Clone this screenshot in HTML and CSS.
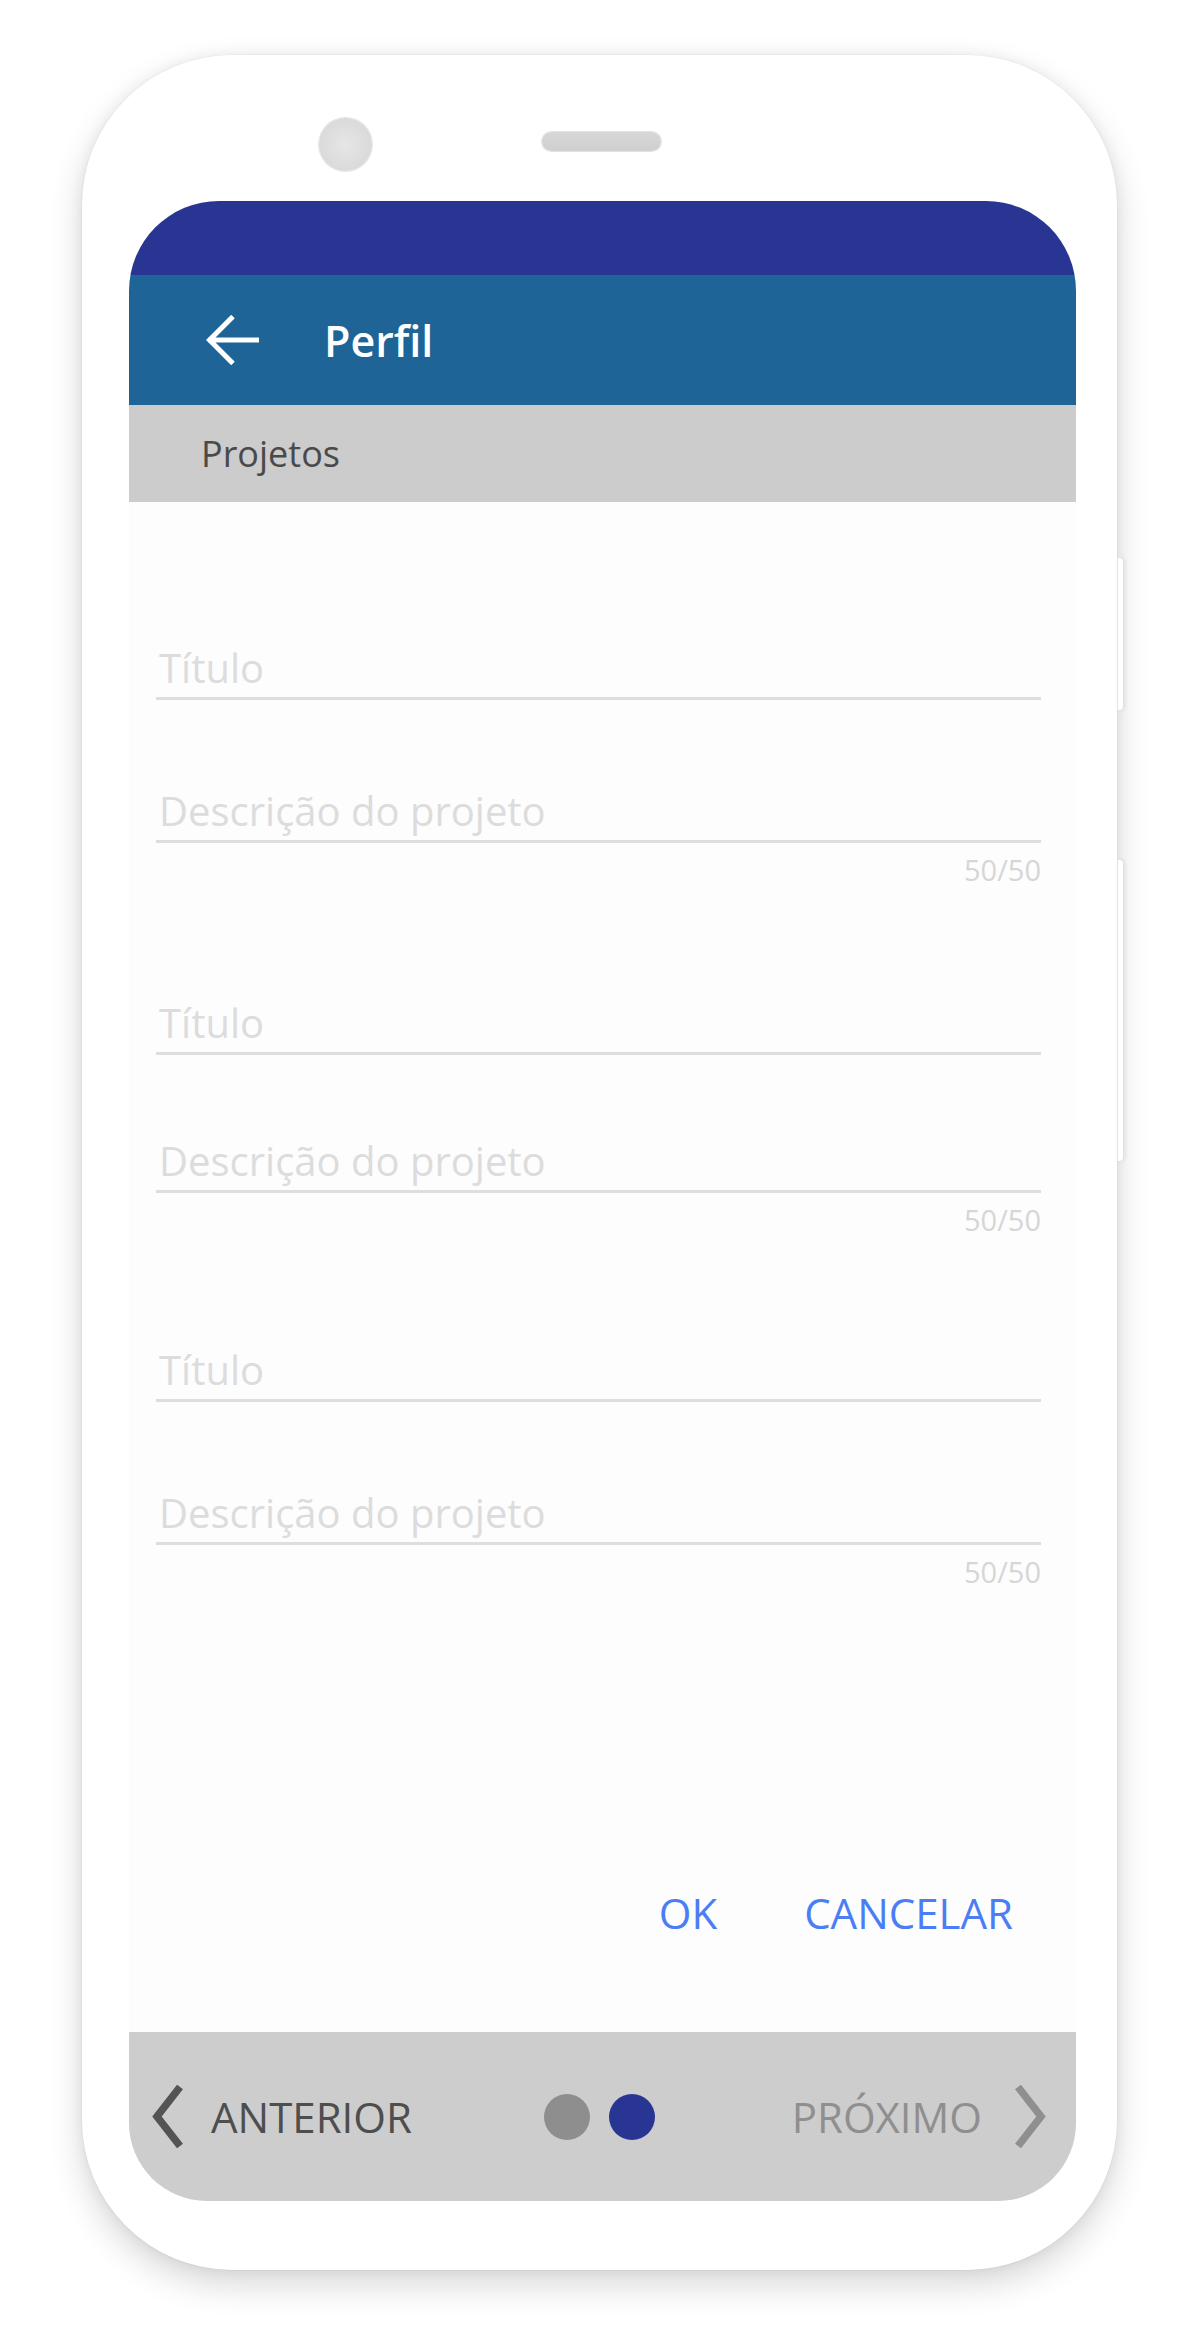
FILE: index.html
```html
<!DOCTYPE html>
<html lang="pt-BR">
<head>
<meta charset="utf-8">
<title>Perfil - Projetos</title>
<link rel="stylesheet" href="styles.css">
</head>
<body>
<div class="phone">
  <span class="side-btn side-btn-a"></span>
  <span class="side-btn side-btn-b"></span>
  <div class="phone-top">
    <span class="camera"></span>
    <span class="speaker"></span>
  </div>
  <div class="screen">
    <div class="status-bar"></div>
    <header class="app-bar">
      <svg class="back-icon" width="54" height="50" viewBox="0 0 54 50" aria-hidden="true">
        <path d="M2 25 H53 M27 1.5 L3.5 25 L27 48.5" fill="none" stroke="#ffffff" stroke-width="5" stroke-linecap="butt" stroke-linejoin="miter"/>
      </svg>
      <h1 class="app-title">Perfil</h1>
    </header>
    <div class="section-bar">Projetos</div>
    <main class="content">
      <section class="project">
        <div class="field">Título</div>
        <div class="field field-desc">Descrição do projeto</div>
        <div class="counter">50/50</div>
      </section>
      <section class="project">
        <div class="field">Título</div>
        <div class="field field-desc">Descrição do projeto</div>
        <div class="counter">50/50</div>
      </section>
      <section class="project">
        <div class="field">Título</div>
        <div class="field field-desc">Descrição do projeto</div>
        <div class="counter">50/50</div>
      </section>
      <div class="actions">
        <span class="action">OK</span>
        <span class="action">CANCELAR</span>
      </div>
    </main>
    <nav class="pager">
      <div class="pager-prev">
        <svg width="33" height="63" viewBox="0 0 33 63" aria-hidden="true">
          <polyline points="30,2 7,31.5 30,61" fill="none" stroke="#545454" stroke-width="7.5"/>
        </svg>
        <span>ANTERIOR</span>
      </div>
      <div class="dots">
        <span class="dot"></span>
        <span class="dot dot-active"></span>
      </div>
      <div class="pager-next">
        <span>PRÓXIMO</span>
        <svg width="33" height="63" viewBox="0 0 33 63" aria-hidden="true">
          <polyline points="3,2 26,31.5 3,61" fill="none" stroke="#8f8f8f" stroke-width="7.5"/>
        </svg>
      </div>
    </nav>
  </div>
</div>
</body>
</html>
```
FILE: styles.css
```css
* { box-sizing: border-box; }

html, body {
  margin: 0;
  padding: 0;
  background: #ffffff;
}

body {
  font-family: "Open Sans", "Noto Sans", "Liberation Sans", sans-serif;
  padding-top: 55px;
  height: 2326px;
  overflow: hidden;
}

.phone {
  position: relative;
  width: 1035px;
  height: 2215px;
  margin-left: 82px;
  padding: 0 41px 69px 47px;
  background: #ffffff;
  border-radius: 150px;
  box-shadow: 0 0 0 1px rgba(0, 0, 0, 0.025), 0 14px 34px rgba(0, 0, 0, 0.16), 0 0 14px rgba(0, 0, 0, 0.06);
}

.side-btn {
  position: absolute;
  right: -6px;
  width: 6px;
  background: #ffffff;
  border-radius: 0 4px 4px 0;
  box-shadow: 2px 0 4px rgba(0, 0, 0, 0.08), inset 1px 0 0 #e4e4e4;
}
.side-btn-a { top: 503px; height: 152px; }
.side-btn-b { top: 805px; height: 301px; }

.phone-top {
  height: 146px;
  display: flex;
  align-items: flex-start;
  padding-left: 190px;
}

.camera {
  width: 53px;
  height: 53px;
  margin-top: 63px;
  border-radius: 50%;
  background: radial-gradient(circle at 50% 50%, #e6e6e6 0%, #dadada 70%, #d2d2d2 100%);
  box-shadow: 0 0 0 1px #e6e6e6;
}

.speaker {
  width: 119px;
  height: 19px;
  margin-top: 77px;
  margin-left: 170px;
  border-radius: 10px;
  background: linear-gradient(#d7d7d7, #cfcfcf);
  box-shadow: 0 0 0 1px #e2e2e2;
}

.screen {
  height: 2000px;
  display: flex;
  flex-direction: column;
  border-radius: 90px 90px 78px 78px;
  overflow: hidden;
  background: #fdfdfd;
}

.status-bar {
  height: 74px;
  flex: none;
  background: #283593;
}

.app-bar {
  height: 130px;
  flex: none;
  display: flex;
  align-items: center;
  padding-left: 77px;
  background: #1e6496;
}

.back-icon { flex: none; }

.app-title {
  margin: 0 0 0 64px;
  font-size: 43px;
  font-weight: 600;
  color: #ffffff;
  line-height: 1;
}

.section-bar {
  height: 97px;
  flex: none;
  display: flex;
  align-items: center;
  padding-left: 72px;
  background: #cccccc;
  color: #4a4a4a;
  font-size: 36px;
}

.content {
  flex: 1;
  display: flex;
  flex-direction: column;
  padding: 142px 35px 89px 27px;
  background: #fdfdfd;
}

.project + .project { margin-top: 111px; }
.project:nth-child(3) { margin-top: 108px; }
.project:nth-child(2) .field-desc { margin-top: 82px; }

.field {
  height: 56px;
  padding: 0 0 5px 3px;
  font-size: 40px;
  line-height: 48px;
  color: #dcdcdc;
  border-bottom: 3px solid #dedede;
}

.field-desc { margin-top: 87px; }

.counter {
  margin-top: 9px;
  text-align: right;
  font-size: 29px;
  line-height: 36px;
  color: #d6d6d6;
}

.actions {
  margin-top: auto;
  display: flex;
  justify-content: flex-end;
  gap: 87px;
  padding-right: 28px;
}

.action {
  font-size: 42px;
  line-height: 60px;
  color: #4b7ef5;
}

.pager {
  height: 169px;
  flex: none;
  display: grid;
  grid-template-columns: 1fr auto 1fr;
  align-items: center;
  padding: 0 28px 0 21px;
  background: #cdcdcd;
  font-size: 42px;
}

.pager-prev {
  justify-self: start;
  display: flex;
  align-items: center;
  gap: 28px;
  color: #4e4e4e;
}

.pager-next {
  justify-self: end;
  display: flex;
  align-items: center;
  gap: 33px;
  color: #8f8f8f;
}

.pager svg { flex: none; display: block; }

.dots {
  display: flex;
  gap: 19px;
}

.dot {
  width: 46px;
  height: 46px;
  border-radius: 50%;
  background: #8e8e8e;
}

.dot-active { background: #283593; }
```
